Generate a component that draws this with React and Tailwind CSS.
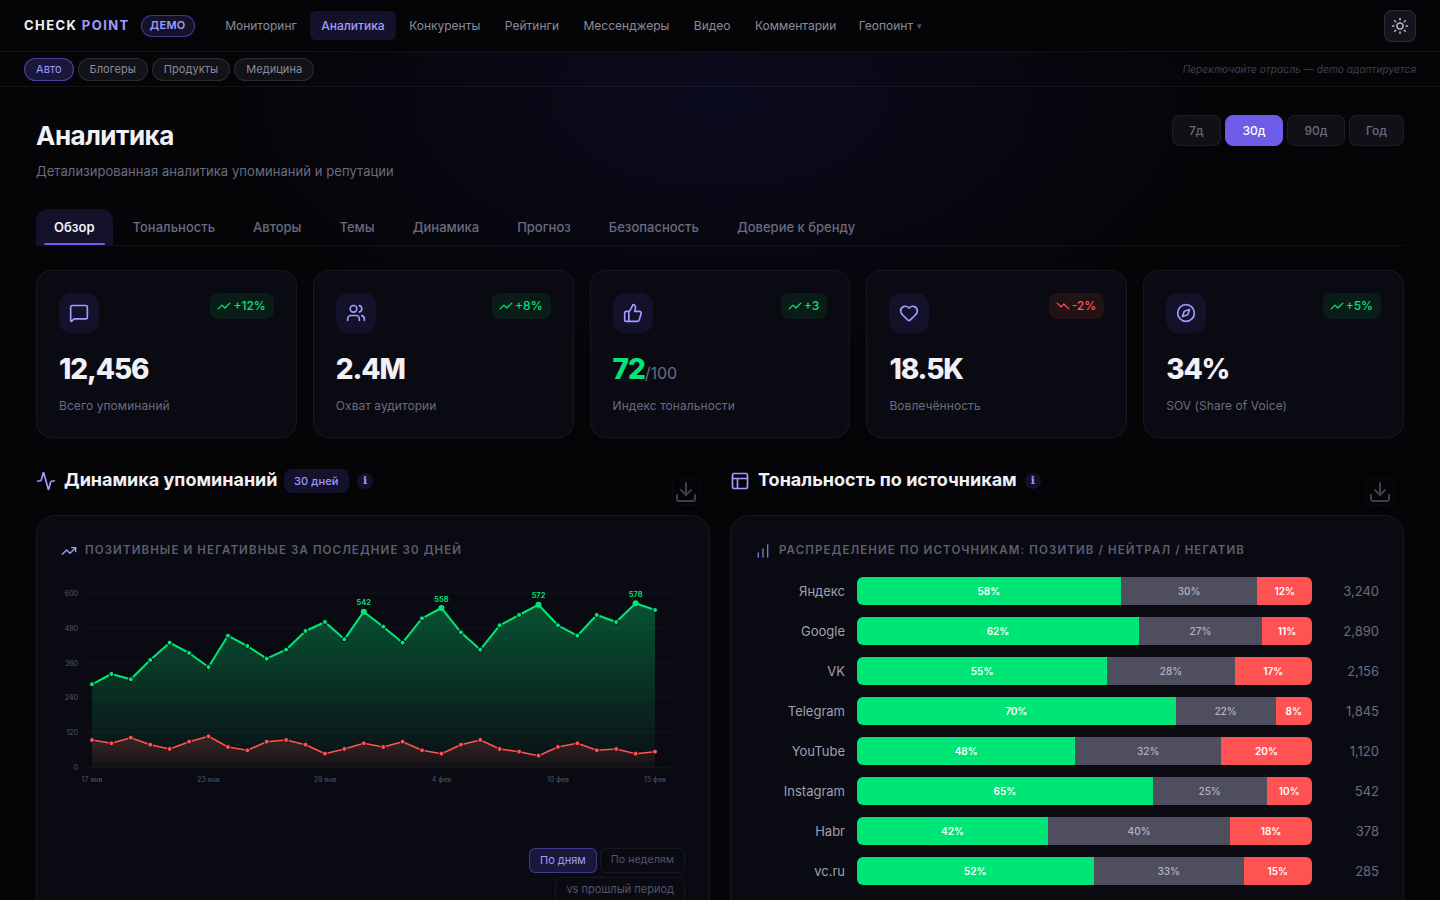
import {
  Activity,
  ChartNoAxesColumnIncreasing,
  Compass,
  Download,
  Heart,
  MessageSquare,
  PanelsTopLeft,
  Sun,
  ThumbsUp,
  TrendingUp,
  Users,
} from "lucide-react";

const navItems = ["Мониторинг", "Аналитика", "Конкуренты", "Рейтинги", "Мессенджеры", "Видео", "Комментарии"];
const industries = ["Авто", "Блогеры", "Продукты", "Медицина"];
const periods = ["7д", "30д", "90д", "Год"];
const tabs = ["Обзор", "Тональность", "Авторы", "Темы", "Динамика", "Прогноз", "Безопасность", "Доверие к бренду"];

const stats = [
  { icon: MessageSquare, value: "12,456", label: "Всего упоминаний", delta: "+12%" },
  { icon: Users, value: "2.4M", label: "Охват аудитории", delta: "+8%" },
  { icon: ThumbsUp, value: "72", suffix: "/100", label: "Индекс тональности", delta: "+3" },
  { icon: Heart, value: "18.5K", label: "Вовлечённость", delta: "-2%", down: true },
  { icon: Compass, value: "34%", label: "SOV (Share of Voice)", delta: "+5%" },
];

const sources = [
  { name: "Яндекс", pos: 58, neu: 30, neg: 12, total: "3,240" },
  { name: "Google", pos: 62, neu: 27, neg: 11, total: "2,890" },
  { name: "VK", pos: 55, neu: 28, neg: 17, total: "2,156" },
  { name: "Telegram", pos: 70, neu: 22, neg: 8, total: "1,845" },
  { name: "YouTube", pos: 48, neu: 32, neg: 20, total: "1,120" },
  { name: "Instagram", pos: 65, neu: 25, neg: 10, total: "542" },
  { name: "Habr", pos: 42, neu: 40, neg: 18, total: "378" },
  { name: "vc.ru", pos: 52, neu: 33, neg: 15, total: "285" },
];

// y-пиксели точек, шаг по x одинаковый
const posY = [684.3, 674, 679.3, 660, 642.7, 653, 667, 635.7, 646, 658.7, 649.7, 631, 622, 639.3, 611.7, 626.7, 642.7, 618.3, 608, 632.3, 649.7, 625.3, 615, 604.7, 625.3, 635.7, 615, 622, 603.3, 610];
const negY = [740, 743.3, 737.7, 744.7, 749, 741.7, 736.3, 747, 750.3, 741.7, 740, 744.7, 753.7, 749, 743.3, 747, 741.7, 750.3, 753.7, 744.7, 740, 749, 751.7, 755.7, 747, 743.3, 750.3, 749, 753.7, 751.7];
const peaks = { 14: "542", 18: "558", 23: "572", 28: "578" };
const xAt = (i) => 92 + (i * 563) / 29;
const linePath = (ys) => ys.map((y, i) => `${i ? "L" : "M"}${xAt(i).toFixed(1)} ${y}`).join(" ");
const areaPath = (ys) => `${linePath(ys)} L655 767.5 L92 767.5 Z`;

const yTicks = [
  { label: "600", y: 593 },
  { label: "480", y: 628 },
  { label: "360", y: 663 },
  { label: "240", y: 697.5 },
  { label: "120", y: 732.5 },
  { label: "0", y: 767.5 },
];
const xTicks = [
  { label: "17 янв", x: 92 },
  { label: "23 янв", x: 208.5 },
  { label: "29 янв", x: 325 },
  { label: "4 фев", x: 441.5 },
  { label: "10 фев", x: 558 },
  { label: "15 фев", x: 655 },
];

function MentionsChart() {
  return (
    <svg viewBox="61 580 624 210" className="block w-[624px] h-[210px]">
      <defs>
        <linearGradient id="posFill" x1="0" y1="0" x2="0" y2="1">
          <stop offset="0%" stopColor="#00e676" stopOpacity="0.33" />
          <stop offset="100%" stopColor="#00e676" stopOpacity="0.02" />
        </linearGradient>
        <linearGradient id="negFill" x1="0" y1="0" x2="0" y2="1">
          <stop offset="0%" stopColor="#ff5252" stopOpacity="0.2" />
          <stop offset="100%" stopColor="#ff5252" stopOpacity="0.03" />
        </linearGradient>
      </defs>
      {yTicks.map((t) => (
        <g key={t.label}>
          <line x1="88" x2="670" y1={t.y} y2={t.y} stroke="#ffffff" strokeOpacity="0.04" />
          <text x="78" y={t.y + 2.5} textAnchor="end" fontSize="7" fill="#55556a">{t.label}</text>
        </g>
      ))}
      {xTicks.map((t) => (
        <text key={t.label} x={t.x} y="781.5" textAnchor="middle" fontSize="7" fill="#55556a">{t.label}</text>
      ))}
      <path d={areaPath(posY)} fill="url(#posFill)" />
      <path d={linePath(posY)} fill="none" stroke="#00e676" strokeWidth="2" strokeLinejoin="round" />
      <path d={areaPath(negY)} fill="url(#negFill)" />
      <path d={linePath(negY)} fill="none" stroke="#ff5252" strokeWidth="1.6" strokeLinejoin="round" />
      {posY.map((y, i) => (
        <circle key={i} cx={xAt(i)} cy={y} r={peaks[i] ? 3 : 2.5} fill="#00e676" stroke="#0a0a14" strokeWidth={peaks[i] ? 0 : 1} />
      ))}
      {negY.map((y, i) => (
        <circle key={i} cx={xAt(i)} cy={y} r="2.4" fill="#ff5252" stroke="#0a0a14" strokeWidth="0.8" />
      ))}
      {Object.entries(peaks).map(([i, label]) => (
        <text key={i} x={xAt(+i)} y={posY[i] - 6.5} textAnchor="middle" fontSize="7.5" fontWeight="600" fill="#00e676">{label}</text>
      ))}
    </svg>
  );
}

// тренд в бейдже: ломаная без стрелки
function DeltaLine({ down }) {
  return (
    <svg width="14" height="14" viewBox="0 0 24 24" fill="none" stroke="currentColor" strokeWidth="2.2" strokeLinecap="round" strokeLinejoin="round">
      <polyline points={down ? "2 7 8.5 13.5 13.5 8.5 22 17" : "2 17 8.5 10.5 13.5 15.5 22 7"} />
    </svg>
  );
}

function StatCard({ icon: Icon, value, suffix, label, delta, down }) {
  return (
    <div className="h-[168px] rounded-2xl border border-white/[0.06] bg-[#0a0a12] px-[22px] pt-[22px]">
      <div className="flex items-start justify-between">
        <div className="flex h-10 w-10 items-center justify-center rounded-xl bg-[#13122a] text-[#a29bfe]">
          <Icon size={20} strokeWidth={2} />
        </div>
        <div className={`flex h-[26px] items-center gap-0.5 rounded-lg pl-[7px] pr-2 text-[12px] font-medium ${down ? "bg-[#201215] text-[#ff5252]" : "bg-[#0a1c17] text-[#00e676]"}`}>
          <DeltaLine down={down} />
          {delta}
        </div>
      </div>
      <div className="mt-[18px] flex h-[36px] items-baseline text-[28px] font-extrabold leading-9 tracking-[-0.04em] text-[#f0f0f5]">
        <span className={suffix ? "text-[#00e676]" : ""}>{value}</span>
        {suffix && <span className="text-[16px] font-normal tracking-normal text-[#6b6b80]">{suffix}</span>}
      </div>
      <div className="mt-[10px] text-[12px] tracking-[0.005em] text-[#6b6b80]">{label}</div>
    </div>
  );
}

function InfoDot() {
  return (
    <span className="flex h-4 w-4 items-center justify-center rounded-full bg-[#13122a] font-['DejaVu_Sans',sans-serif] text-[11px] font-bold text-[#a29bfe]">
      ℹ
    </span>
  );
}

function DownloadButton() {
  return (
    <button className="ml-auto mr-[10px] mt-[10px] flex h-[27px] w-[28px] items-center justify-center rounded-md border border-white/[0.03] text-[#3f3f4c]">
      <Download size={24} strokeWidth={2} />
    </button>
  );
}

function SourceRow({ name, pos, neu, neg, total }) {
  return (
    <div className="flex h-7 items-center">
      <div className="w-[90px] pt-px text-right text-[13px] text-[#a0a0b0]">{name}</div>
      <div className="ml-3 flex h-7 flex-1 overflow-hidden rounded-md text-[10px] font-semibold">
        <div className="flex items-center justify-center bg-[#00e676] text-white" style={{ width: `${pos}%` }}>{pos}%</div>
        <div className="flex items-center justify-center bg-[#4f4e5e] font-medium text-[#b4b4c0]" style={{ width: `${neu}%` }}>{neu}%</div>
        <div className="flex items-center justify-center bg-[#ff5252] text-white" style={{ width: `${neg}%` }}>{neg}%</div>
      </div>
      <div className="ml-3 w-[55px] pt-px text-right text-[13px] text-[#6b6b80]">{total}</div>
    </div>
  );
}

export default function App() {
  return (
    <div className="h-[900px] overflow-hidden bg-[#050508] bg-[radial-gradient(ellipse_500px_260px_at_50%_100px,#0b0b1e_0%,#050508_100%)] font-['Inter',sans-serif] text-[#f0f0f5]">
      {/* Header */}
      <header className="flex h-[52px] items-center border-b border-white/[0.06] bg-[#050508] pl-6 pr-6">
        <div className="text-[13px] font-bold tracking-[0.11em] whitespace-nowrap">
          CHECK <span className="text-[#a29bfe]">POINT</span>
        </div>
        <div className="ml-[11px] flex h-[22px] items-center rounded-full border border-[#6c5ce7]/50 bg-[#13122a] px-2 text-[11px] font-semibold tracking-[0.03em] text-[#a29bfe]">
          ДЕМО
        </div>
        <nav className="ml-[19.5px] flex items-center gap-[2.5px] text-[12px] text-[#8b8b9b]">
          {navItems.map((item) => (
            <span key={item} className={`flex h-[29px] items-center rounded-md px-[11px] ${item === "Аналитика" ? "bg-[#13122a] font-medium text-[#a29bfe]" : ""}`}>
              {item}
            </span>
          ))}
          <span className="flex h-[29px] items-center gap-1 px-[9px]">
            Геопоинт <span className="text-[9px] text-[#55556a]">▾</span>
          </span>
        </nav>
        <button className="ml-auto flex h-8 w-8 items-center justify-center rounded-lg border border-white/[0.1] bg-[#14141c] text-[#b4b4c0]">
          <Sun size={18} />
        </button>
      </header>

      {/* Industries */}
      <div className="flex h-[35px] items-center gap-1 border-b border-white/[0.06] pl-6 pr-6">
        {industries.map((item, i) => (
          <span key={item} className={`flex h-[23px] items-center rounded-full border px-[11px] text-[11px] tracking-[0.005em] ${i === 0 ? "border-[#6c5ce7]/60 bg-[#1a1838] text-[#a29bfe]" : "border-white/[0.1] bg-[#121217] text-[#8b8b9b]"}`}>
            {item}
          </span>
        ))}
        <span className="ml-auto mt-px text-[10.2px] italic text-[#3f3f4c]">Переключайте отрасль — demo адаптируется</span>
      </div>

      <main className="px-9 pt-7">
        {/* Title */}
        <div className="flex items-start justify-between">
          <div>
            <h1 className="text-[26px] font-bold leading-[42px] tracking-[-0.02em]">Аналитика</h1>
            <p className="mt-1 text-[13px] leading-5 tracking-[0.005em] text-[#6b6b80]">Детализированная аналитика упоминаний и репутации</p>
          </div>
          <div className="flex gap-1">
            {periods.map((p) => (
              <button key={p} className={`h-[31px] rounded-lg border text-[12px] font-medium ${p === "Год" ? "px-4" : "px-[16.5px]"} ${p === "30д" ? "border-[#6c5ce7] bg-[#6c5ce7] text-white" : "border-white/[0.06] bg-[#101016] text-[#6b6b80]"}`}>
                {p}
              </button>
            ))}
          </div>
        </div>

        {/* Tabs */}
        <div className="mt-[28px] flex gap-0.5 border-b border-white/[0.06]">
          {tabs.map((tab, i) => (
            <div key={tab} className={`relative flex h-9 items-center rounded-t-xl px-[18px] pt-px text-[13px] font-medium ${i === 0 ? "bg-[#13122a] font-semibold text-[#f0f0f5]" : "text-[#6b6b80]"}`}>
              {tab}
              {i === 0 && <span className="absolute inset-x-2 bottom-0 h-0.5 rounded-full bg-[#6c5ce7]" />}
            </div>
          ))}
        </div>

        {/* Stat cards */}
        <div className="mt-6 grid grid-cols-5 gap-4">
          {stats.map((s) => (
            <StatCard key={s.label} {...s} />
          ))}
        </div>

        {/* Sections */}
        <div className="mt-[30px] grid grid-cols-2 gap-5">
          <section>
            <div className="flex h-[47px] items-start">
              <div className="mt-px flex h-6 items-center gap-2">
                <Activity size={20} className="text-[#a29bfe]" />
                <h2 className="pb-1 text-[18px] font-bold">Динамика упоминаний</h2>
                <span className="-ml-0.5 flex h-6 items-center rounded-lg bg-[#13122a] px-[10.5px] text-[11px] font-medium tracking-[0.01em] text-[#a29bfe]">30 дней</span>
                <InfoDot />
              </div>
              <DownloadButton />
            </div>
            <div className="h-[500px] rounded-[20px] border border-white/[0.06] bg-[#0a0a12] px-6 pt-[26px]">
              <div className="flex h-[18px] items-center gap-2 text-[11.5px] font-semibold uppercase tracking-[0.097em] text-[#5f5f70]">
                <TrendingUp size={16} className="text-[#a29bfe]" />
                Позитивные и негативные за последние 30 дней
              </div>
              <div className="mt-5">
                <MentionsChart />
              </div>
              <div className="mt-[58px] flex flex-wrap justify-end gap-x-[3px] gap-y-0.5">
                <span className="flex h-[25px] items-center rounded-md border border-[#6c5ce7]/50 bg-[#1a1838] px-2.5 text-[11px] text-[#a29bfe]">По дням</span>
                <span className="flex h-[25px] items-center rounded-md border border-white/[0.06] px-2.5 text-[10.7px] text-[#55556a]">По неделям</span>
                <div className="basis-full" />
                <span className="flex h-[25px] items-center rounded-md border border-white/[0.06] px-2.5 text-[11px] text-[#55556a]">vs прошлый период</span>
              </div>
            </div>
          </section>

          <section>
            <div className="flex h-[47px] items-start">
              <div className="mt-px flex h-6 items-center gap-2">
                <PanelsTopLeft size={20} className="text-[#a29bfe]" />
                <h2 className="pb-1 text-[18px] font-bold">Тональность по источникам</h2>
                <InfoDot />
              </div>
              <DownloadButton />
            </div>
            <div className="h-[500px] rounded-[20px] border border-white/[0.06] bg-[#0a0a12] px-6 pt-[26px]">
              <div className="flex h-[18px] items-center gap-2 text-[11.5px] font-semibold uppercase tracking-[0.097em] text-[#5f5f70]">
                <ChartNoAxesColumnIncreasing size={16} className="text-[#8078d8]" />
                Распределение по источникам: позитив / нейтрал / негатив
              </div>
              <div className="mt-[17px] flex flex-col gap-3">
                {sources.map((s) => (
                  <SourceRow key={s.name} {...s} />
                ))}
              </div>
            </div>
          </section>
        </div>
      </main>
    </div>
  );
}
